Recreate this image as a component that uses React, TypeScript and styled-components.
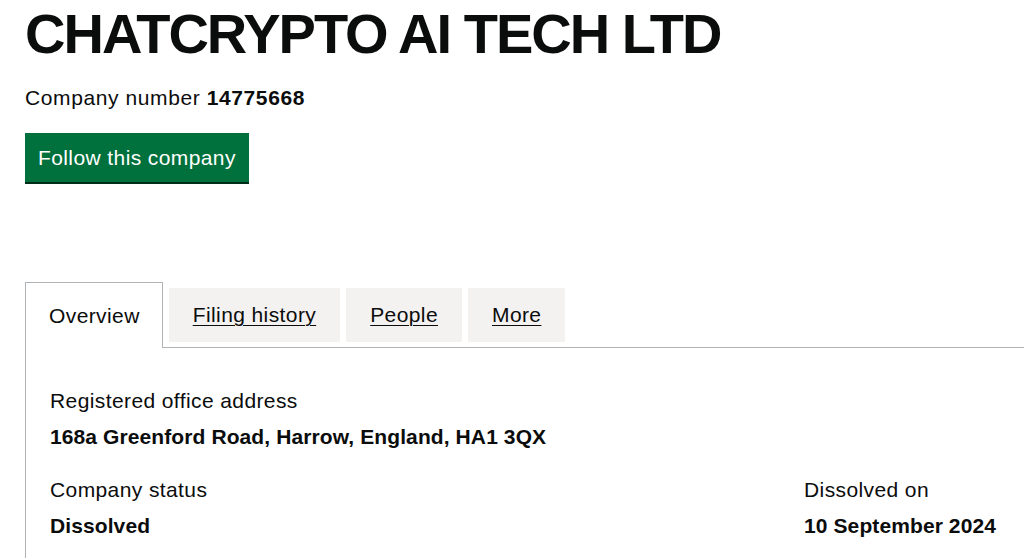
import React from "react";
import styled, { createGlobalStyle } from "styled-components";

const GlobalStyle = createGlobalStyle`
  html, body {
    margin: 0;
    padding: 0;
    background: #ffffff;
    overflow: hidden;
  }
  body {
    font-family: "Liberation Sans", Arial, sans-serif;
    color: #0b0c0c;
  }
`;

const Page = styled.main`
  padding: 0 0 0 25px;
`;

const Title = styled.h1`
  margin: 5px 0 0;
  font-size: 56px;
  line-height: 58px;
  font-weight: 700;
  letter-spacing: -2px;
`;

const CompanyNumber = styled.p`
  margin: 22px 0 0;
  font-size: 21px;
  line-height: 25px;
  letter-spacing: 0.6px;
  strong {
    font-weight: 700;
    letter-spacing: 0.6px;
  }
`;

const FollowButton = styled.button`
  display: block;
  margin-top: 23px;
  height: 49px;
  padding: 0 13px;
  border: none;
  border-radius: 0;
  background: #00703c;
  box-shadow: 0 2px 0 #002d18;
  color: #ffffff;
  font-family: inherit;
  font-size: 21px;
  letter-spacing: 0.4px;
  cursor: pointer;
`;

const Tabs = styled.section`
  margin-top: 100px;
`;

const TabList = styled.ul`
  display: flex;
  align-items: flex-start;
  gap: 6px;
  margin: 0;
  padding: 0;
  list-style: none;
`;

const Tab = styled.li<{ $selected?: boolean }>`
  display: flex;
  align-items: center;
  box-sizing: border-box;
  font-size: 21px;
  letter-spacing: 0.4px;
  ${(p) =>
    p.$selected
      ? `
    height: 66px;
    margin-bottom: -1px;
    padding: 0 22px 0 23px;
    background: #ffffff;
    border: 1px solid #b1b4b6;
    border-bottom: none;
    position: relative;
    z-index: 1;
  `
      : `
    height: 54px;
    margin-top: 6px;
    padding: 0 24px;
    background: #f3f2f1;
  `}
`;

const TabLink = styled.a`
  color: #0b0c0c;
  text-decoration: underline;
  text-underline-offset: 3px;
  text-decoration-thickness: 1px;
`;

const Panel = styled.div`
  border-top: 1px solid #b1b4b6;
  border-left: 1px solid #b1b4b6;
  padding: 40px 0 24px 24px;
`;

const Row = styled.div`
  display: grid;
  grid-template-columns: 754px 1fr;
  & + & {
    margin-top: 28px;
  }
`;

const Field = styled.div``;

const Label = styled.div`
  font-size: 21px;
  line-height: 25px;
  letter-spacing: 0.4px;
`;

const Value = styled.div`
  margin-top: 11px;
  font-size: 21px;
  line-height: 25px;
  font-weight: 700;
  letter-spacing: 0.1px;
`;

export default function App() {
  return (
    <>
      <GlobalStyle />
      <Page>
        <Title>CHATCRYPTO AI TECH LTD</Title>
        <CompanyNumber>
          Company number <strong>14775668</strong>
        </CompanyNumber>
        <FollowButton>Follow this company</FollowButton>
        <Tabs>
          <TabList>
            <Tab $selected>Overview</Tab>
            <Tab>
              <TabLink href="#">Filing history</TabLink>
            </Tab>
            <Tab>
              <TabLink href="#">People</TabLink>
            </Tab>
            <Tab>
              <TabLink href="#">More</TabLink>
            </Tab>
          </TabList>
          <Panel>
            <Row>
              <Field>
                <Label>Registered office address</Label>
                <Value>168a Greenford Road, Harrow, England, HA1 3QX</Value>
              </Field>
            </Row>
            <Row>
              <Field>
                <Label>Company status</Label>
                <Value>Dissolved</Value>
              </Field>
              <Field>
                <Label>Dissolved on</Label>
                <Value>10 September 2024</Value>
              </Field>
            </Row>
          </Panel>
        </Tabs>
      </Page>
    </>
  );
}
